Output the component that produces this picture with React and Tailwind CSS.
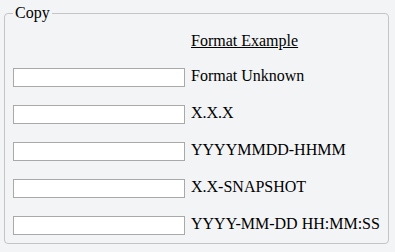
const formats = [
  'Format Unknown',
  'X.X.X',
  'YYYYMMDD-HHMM',
  'X.X-SNAPSHOT',
  'YYYY-MM-DD HH:MM:SS',
]

export default function App() {
  return (
    <div className="[font-family:Liberation_Serif] w-[395px] h-[252px] bg-[#f3f4f6] pl-[4px] pt-[4px] text-[16px] text-black">
      <fieldset className="[font-family:Liberation_Serif] w-[385px] h-[240px] border border-[#c4c4c4] rounded-[4px] px-[8px] pt-[10px]">
        <legend className="[font-family:Liberation_Serif] px-[2px] leading-[18px]">Copy</legend>
        <div className="[font-family:Liberation_Serif] grid grid-cols-[172px_auto] gap-x-[6px] gap-y-[18px]">
          <div />
          <span className="[font-family:Liberation_Serif] underline leading-[18px]">Format Example</span>
          {formats.map((f) => (
            <div key={f} className="contents">
              <input type="text" className="h-[19px] border border-[#a9a9a9] bg-white" />
              <span className="[font-family:Liberation_Serif] h-[19px] leading-[16px] whitespace-nowrap">{f}</span>
            </div>
          ))}
        </div>
      </fieldset>
    </div>
  )
}
